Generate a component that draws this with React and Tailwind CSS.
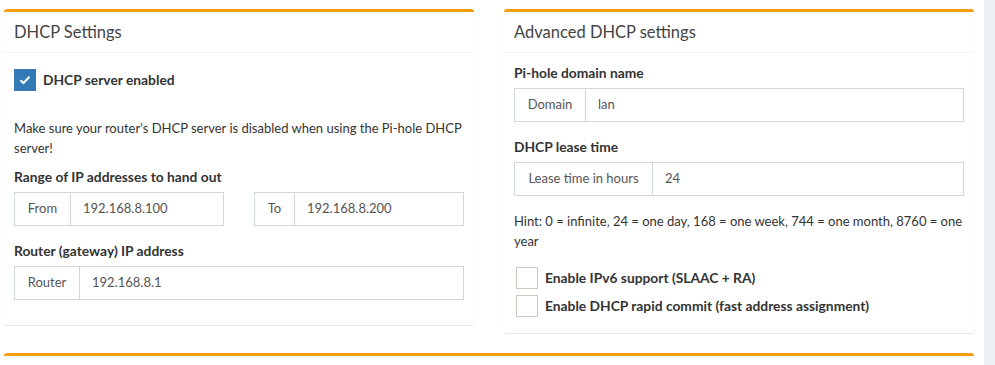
const font = { fontFamily: 'Lato, "Liberation Sans", sans-serif' };

function Box({ title, children, className = '' }) {
    return (
        <section className={`rounded-[3px] border-t-[3px] border-[#f39c12] bg-white shadow-[0_1px_1px_rgba(0,0,0,0.1)] ${className}`}>
            <div className="border-b border-[#f4f4f4] p-[10px]">
                <h3 className="text-[16.5px] leading-[20px] text-[#444]">{title}</h3>
            </div>
            <div className="p-[10px]">{children}</div>
        </section>
    );
}

function InputGroup({ addon, addonWidth, value }) {
    return (
        <div className="flex h-[34px] border border-[#d2d6de] text-[13px] text-[#555]">
            <span className={`flex shrink-0 items-center justify-center border-r border-[#d2d6de] ${addonWidth}`}>{addon}</span>
            <span className="flex items-center px-[12px]">{value}</span>
        </div>
    );
}

function Label({ children, className = '' }) {
    return <label className={`mb-[5px] block text-[13.8px] font-bold leading-[20px] text-[#333] ${className}`}>{children}</label>;
}

function Checkbox({ checked, label, className = '' }) {
    return (
        <div className={`flex h-[22px] items-center gap-[7px] ${className}`}>
            {checked ? (
                <span className="flex h-[22px] w-[22px] items-center justify-center bg-[#337ab7]">
                    <svg width="12" height="10" viewBox="0 0 12 10" fill="none">
                        <path d="M1.5 5.2 4.5 8 10.5 1.8" stroke="white" strokeWidth="2" />
                    </svg>
                </span>
            ) : (
                <span className="h-[22px] w-[22px] border border-[#cdc7c0] bg-white" />
            )}
            <span className="text-[13.8px] font-bold text-[#333]">{label}</span>
        </div>
    );
}

export default function App() {
    return (
        <div className="flex h-[365px] w-[995px] overflow-hidden bg-white" style={font}>
            <main className="w-[984px] pl-[4px] pt-[9px]">
                <div className="flex items-start gap-[30px]">
                    <Box title="DHCP Settings" className="w-[470px]">
                        <Checkbox checked label="DHCP server enabled" className="mt-[6px]" />
                        <p className="mt-[27px] text-[13px] leading-[20px] text-[#333]">
                            Make sure your router's DHCP server is disabled when using the Pi-hole DHCP server!
                        </p>
                        <Label className="mt-[9px]">Range of IP addresses to hand out</Label>
                        <div className="grid grid-cols-2 gap-[30px]">
                            <InputGroup addon="From" addonWidth="w-[56px]" value="192.168.8.100" />
                            <InputGroup addon="To" addonWidth="w-[40px]" value="192.168.8.200" />
                        </div>
                        <Label className="mt-[15px]">Router (gateway) IP address</Label>
                        <div className="mb-[15px]">
                            <InputGroup addon="Router" addonWidth="w-[65px]" value="192.168.8.1" />
                        </div>
                    </Box>
                    <Box title="Advanced DHCP settings" className="w-[470px]">
                        <Label>Pi-hole domain name</Label>
                        <InputGroup addon="Domain" addonWidth="w-[71px]" value="lan" />
                        <Label className="mt-[15px]">DHCP lease time</Label>
                        <InputGroup addon="Lease time in hours" addonWidth="w-[138px]" value="24" />
                        <p className="mt-[15px] text-[13px] leading-[20px] text-[#333]">
                            Hint: 0 = infinite, 24 = one day, 168 = one week, 744 = one month, 8760 = one year
                        </p>
                        <div className="mb-[6px] mt-[16px] space-y-[6px] pl-[2px]">
                            <Checkbox label="Enable IPv6 support (SLAAC + RA)" />
                            <Checkbox label="Enable DHCP rapid commit (fast address assignment)" />
                        </div>
                    </Box>
                </div>
                <section className="mt-[20px] h-[40px] w-[970px] rounded-[3px] border-t-[3px] border-[#f39c12] bg-white" />
            </main>
            <div className="w-[11px] bg-[#ecf0f5]" />
        </div>
    );
}
